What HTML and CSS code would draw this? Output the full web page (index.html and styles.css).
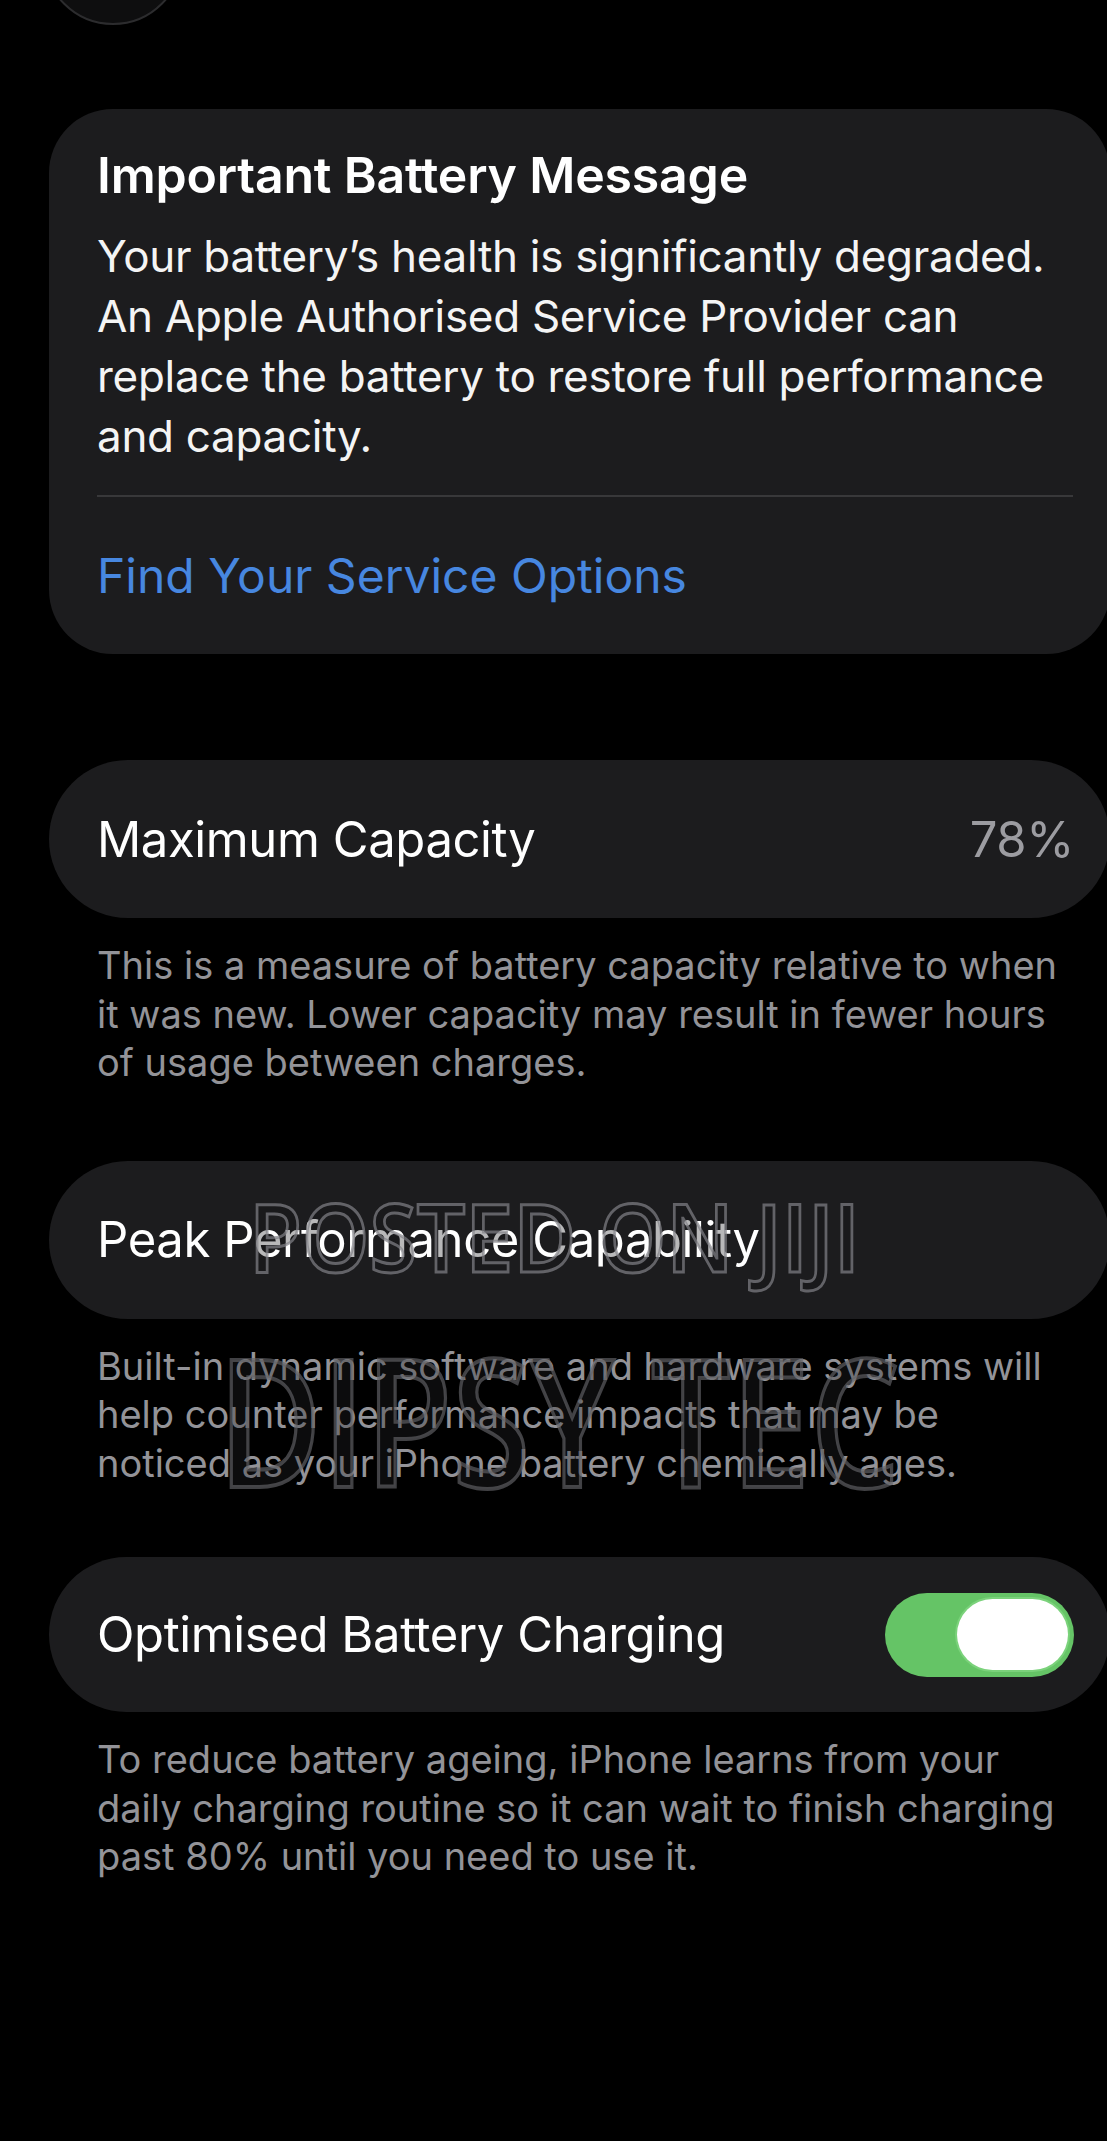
FILE: index.html
```html
<!DOCTYPE html>
<html lang="en">
    <head>
        <title>Battery Health</title>
        <meta charset="utf-8" />
        <link rel="stylesheet" href="styles.css">
    </head>
    <body>
        <div class="screen">
            <div class="nav">
                <div class="back"></div>
            </div>

            <section class="card message">
                <h2 class="msg-title">Important Battery Message</h2>
                <p class="msg-body">Your battery’s health is significantly degraded. An Apple Authorised Service Provider can replace the battery to restore full performance and capacity.</p>
                <div class="divider"></div>
                <a class="link">Find Your Service Options</a>
            </section>

            <div class="group first">
                <div class="card row">
                    <span class="label">Maximum Capacity</span>
                    <span class="value">78%</span>
                </div>
                <p class="note">This is a measure of battery capacity relative to when it was new. Lower capacity may result in fewer hours of usage between charges.</p>
            </div>

            <div class="group">
                <div class="card row">
                    <span class="label">Peak Performance Capability</span>
                </div>
                <p class="note">Built-in dynamic software and hardware systems will help counter performance impacts that may be noticed as your iPhone battery chemically ages.</p>
            </div>

            <div class="group last">
                <div class="card row">
                    <span class="label">Optimised Battery Charging</span>
                    <span class="toggle on"><span class="knob"></span></span>
                </div>
                <p class="note">To reduce battery ageing, iPhone learns from your daily charging routine so it can wait to finish charging past 80% until you need to use it.</p>
            </div>

            <!-- watermark over the screenshot -->
            <svg class="watermark" width="1107" height="2141" viewBox="0 0 1107 2141">
                <text class="wm-small" x="249" y="1272" textLength="611" lengthAdjust="spacingAndGlyphs">POSTED ON JIJI</text>
                <text class="wm-big" x="218" y="1487" textLength="682" lengthAdjust="spacingAndGlyphs">DIPSY TEC</text>
            </svg>
        </div>
    </body>
</html>
```

FILE: styles.css
```css
body {
    margin: 0;
    padding: 0;
    background-color: #000;
    font-family: Inter, "Noto Sans", sans-serif;
    color: #fff;
}
.screen {
    position: relative;
    width: 1107px;
    min-height: 2141px;
    overflow: hidden;
}

/* top bar with the back button cut off */
.nav {
    display: flex;
    height: 109px;
}
.back {
    width: 140px;
    height: 140px;
    margin-top: -115px;
    margin-left: 43px;
    border-radius: 50%;
    background-color: #0e0e0f;
    border: 2px solid #2c2c2e;
    box-sizing: border-box;
}

/* cards */
.card {
    margin-left: 49px;
    margin-right: -3px;
    background-color: #1c1c1e;
    border-radius: 64px;
}
.message {
    padding: 36px 37px 48px 48px;
}
.msg-title {
    margin: 0;
    font-size: 50px;
    line-height: 60px;
    font-weight: 600;
    letter-spacing: -0.2px;
}
.msg-body {
    margin: 21px 0 0 0;
    font-size: 44px;
    line-height: 60px;
    font-weight: 400;
    letter-spacing: -0.3px;
    color: #f4f4f4;
}
.divider {
    height: 2px;
    margin-top: 29px;
    background-color: #38383a;
}
.link {
    display: block;
    margin-top: 49px;
    font-size: 48px;
    line-height: 60px;
    color: #4787e0;
}

.group {
    margin-top: 74px;
}
.group.first {
    margin-top: 106px;
}
.group.last {
    margin-top: 70px;
}
.row {
    height: 158px;
    display: flex;
    align-items: center;
    justify-content: space-between;
    padding: 0 36px 0 48px;
    border-radius: 79px;
}
.group.last .row {
    height: 155px;
}
.label {
    font-size: 49px;
    letter-spacing: -0.4px;
}
.value {
    font-size: 49px;
    letter-spacing: -0.4px;
    color: #9c9ca1;
}
.note {
    margin: 0;
    padding: 23px 25px 0 97px;
    font-size: 38px;
    line-height: 48.5px;
    color: #939398;
}

/* switch */
.toggle {
    display: flex;
    justify-content: flex-end;
    align-items: center;
    width: 189px;
    height: 84px;
    padding: 0 6px;
    box-sizing: border-box;
    border-radius: 42px;
    background-color: #65c466;
}
.knob {
    width: 111px;
    height: 71px;
    border-radius: 36px;
    background-color: #fff;
    box-shadow: 0 0 0 2px #7bd27b;
}

/* watermark */
.watermark {
    position: absolute;
    left: 0;
    top: 0;
    pointer-events: none;
    font-family: "Open Sans", sans-serif;
    font-weight: 600;
}
.wm-small {
    font-size: 95px;
    fill: rgba(20, 20, 22, 0.3);
    stroke: rgba(130, 130, 135, 0.7);
    stroke-width: 3px;
}
.wm-big {
    font-size: 178px;
    fill: rgba(40, 40, 44, 0.3);
    stroke: rgba(100, 100, 105, 0.65);
    stroke-width: 4px;
}
```
